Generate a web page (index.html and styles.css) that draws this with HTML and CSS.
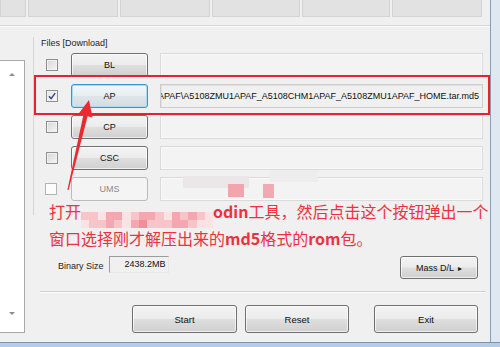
FILE: index.html
```html
<!DOCTYPE html>
<html lang="zh-CN">
<head>
<meta charset="utf-8">
<title>Odin</title>
<link rel="stylesheet" href="styles.css">
</head>
<body>
<div class="screen">
  <div class="top-area">
    <div class="window">
      <div class="topstrip">
        <div class="cell w26"></div>
        <div class="cell w90"></div>
        <div class="cell w90"></div>
        <div class="cell w88"></div>
        <div class="cell w88"></div>
        <div class="cell w90"></div>
      </div>
      <div class="rule"></div>
      <div class="main">
        <div class="list"><span class="tri up"></span><span class="tri down"></span></div>
        <div class="content">
          <div class="files">
            <div class="legend">Files [Download]</div>
            <div class="rows">
              <div class="row"><span class="chk"></span><button class="btn">BL</button><div class="field"></div></div>
              <div class="row"><span class="chk on"><svg viewBox="0 0 10 10" width="10" height="10"><path d="M2 5.2 L4.1 7.6 L8.2 2.2" fill="none" stroke="#2b3f8c" stroke-width="1.4"/></svg></span><button class="btn focus">AP</button><div class="field path"><span>APAF\A5108ZMU1APAF_A5108CHM1APAF_A5108ZMU1APAF_HOME.tar.md5</span></div></div>
              <div class="row"><span class="chk"></span><button class="btn">CP</button><div class="field"></div></div>
              <div class="row"><span class="chk"></span><button class="btn">CSC</button><div class="field"></div></div>
              <div class="row"><span class="chk dis"></span><button class="btn disabled">UMS</button><div class="field"></div></div>
            </div>
          </div>
          <div class="binary">
            <span class="blabel">Binary Size</span>
            <span class="bbox">2438.2MB</span>
            <button class="btn mass">Mass D/L <span class="play">&#9656;</span></button>
          </div>
          <div class="sep"></div>
          <div class="actions">
            <button class="btn act start">Start</button>
            <button class="btn act reset">Reset</button>
            <button class="btn act">Exit</button>
          </div>
        </div>
      </div>
    </div>
    <div class="frame-right"></div>
  </div>
  <div class="frame-bottom"></div>

  <div class="overlay">
    <div class="redbox"></div>
    <div class="smudge g1"></div>
    <div class="smudge g2"></div>
    <div class="smudge p1"></div>
    <div class="smudge p2"></div>
    <svg class="arrow" width="500" height="347" viewBox="0 0 500 347">
      <polygon points="89,100 92.5,117.5 87.6,116.2 68.6,190 67.4,190 83.3,115.2 78.4,114" fill="#ea2a2e"/>
    </svg>
    <div class="note">
      <div class="line">打开<span class="mosaic"><i class="s2"></i><i class="s2"></i><i class="s1"></i><i class="s3"></i><i class="s3"></i><i class="s1"></i><i class="s2"></i><i class="s3"></i><i class="s3"></i><i class="s2"></i><i class="s1"></i><i class="s3"></i><i class="s2"></i><i class="s3"></i><i class="s2"></i><i class="s1"></i><i class="s1"></i><i class="s2"></i><i class="s2"></i><i class="s3"></i><i class="s2"></i><i class="s1"></i><i class="s3"></i><i class="s4"></i><i class="s2"></i><i class="s2"></i><i class="s2"></i><i class="s3"></i><i class="s3"></i><i class="s2"></i><i class="s1"></i><i class="s1"></i></span><b>odin</b>工具，然后点击这个按钮弹出一个</div>
      <div class="line">窗口选择刚才解压出来的<b>md5</b>格式的<b>rom</b>包。</div>
    </div>
  </div>
</div>
</body>
</html>
```

FILE: styles.css
```css
* { box-sizing: border-box; }
html, body { margin: 0; padding: 0; }
body {
  width: 500px;
  height: 347px;
  overflow: hidden;
  background: #dde6ef;
  font-family: "Liberation Sans", Arial, sans-serif;
}
.screen {
  position: relative;
  width: 500px;
  height: 347px;
  display: flex;
  flex-direction: column;
}
.top-area { display: flex; height: 342px; }
.window {
  width: 491px;
  height: 342px;
  background: #f0f0f0;
  border-right: 1px solid #8a9cb0;
}
.frame-right { flex: 1; background: #dfe7f0; }
.frame-bottom {
  height: 5px;
  border-top: 1px solid #7f93aa;
  background: #b4cce6;
}

/* top status cells */
.topstrip {
  display: flex;
  gap: 2px;
  height: 17px;
}
.cell {
  height: 17px;
  background: #e2e2e2;
  border: 1px solid #d3d3d3;
  border-top: none;
}
.w26 { width: 26px; }
.w90 { width: 90px; }
.w88 { width: 88px; }
.rule {
  margin-top: 8px;
  border-top: 1px solid #d6d6d6;
  border-bottom: 1px solid #fbfbfb;
}

.main { display: flex; gap: 8px; }
.list {
  width: 25px;
  height: 273px;
  margin-top: 33px;
  background: #fff;
  border: 1px solid #a8a8a8;
  border-left: none;
  display: flex;
  flex-direction: column;
  justify-content: space-between;
  align-items: center;
  padding: 12px 0 17px;
}
.tri { width: 0; height: 0; border-left: 3px solid transparent; border-right: 3px solid transparent; }
.tri.up { border-bottom: 3px solid #8c8c8c; }
.tri.down { border-top: 3px solid #8c8c8c; }

.content { width: 450px; display: flex; flex-direction: column; }
.files {
  margin-top: 10px;
  border-left: 1px solid #d4d4d4;
  padding-bottom: 14px;
}
.legend {
  padding-left: 7px;
  height: 12px;
  line-height: 12px;
  font-size: 9px;
  color: #1e1e1e;
  margin-bottom: 4px;
}
.rows { display: flex; flex-direction: column; gap: 7px; }
.row {
  display: flex;
  align-items: center;
  height: 24px;
  padding-left: 12px;
}
.chk {
  width: 12px;
  height: 12px;
  flex: none;
  border: 1px solid #8e8f8f;
  background: linear-gradient(135deg, #d6d6d6, #f6f6f6);
  box-shadow: inset 0 0 0 1px #f1f1f1;
  display: flex;
  align-items: center;
  justify-content: center;
}
.chk.on { background: linear-gradient(135deg, #e4e4e4, #fbfbfb); }
.chk.dis {
  border-color: #b4b4b4;
  background: #fcfcfc;
  box-shadow: none;
  margin-left: -1px;
  margin-right: 1px;
}
.btn {
  font-family: "Liberation Sans", Arial, sans-serif;
  font-size: 9px;
  color: #111;
  padding: 0;
  border: 1px solid #707070;
  border-radius: 3px;
  background: linear-gradient(#f3f3f3 0%, #ececec 48%, #dedede 52%, #d0d0d0 100%);
  box-shadow: inset 0 0 0 1px rgba(255,255,255,0.65);
}
.row .btn {
  width: 77px;
  height: 24px;
  margin-left: 13px;
  flex: none;
}
.btn.focus {
  border-color: #3d93cf;
  background: linear-gradient(#f2f6f8 0%, #e8eef1 48%, #dde5e9 52%, #d3dde2 100%);
  box-shadow: inset 0 0 0 1px #a9dcf4;
}
.btn.disabled {
  border-color: #b8bcbe;
  background: #f4f4f4;
  color: #8a8a8a;
  box-shadow: none;
}
.field {
  flex: 1;
  height: 24px;
  margin-left: 12px;
  border: 1px solid #dadada;
  background: #f3f3f3;
  box-shadow: inset 0 0 0 1px #f9f9f9;
}
.field.path {
  display: flex;
  align-items: center;
  justify-content: flex-end;
  overflow: hidden;
  padding-right: 3px;
  border-color: #cdcdcd;
  background: #f0f0f0;
  box-shadow: inset 1px 1px 0 #e2e2e2;
  font-size: 9px;
  color: #111;
  white-space: nowrap;
}
.field.path span { flex: none; }

.binary {
  margin-top: 41px;
  display: flex;
  align-items: flex-start;
  height: 23px;
  padding-left: 25px;
  padding-right: 5px;
}
.blabel {
  font-size: 9px;
  line-height: 17px;
  padding-top: 2px;
  margin-right: 5px;
  color: #1e1e1e;
}
.bbox {
  width: 60px;
  height: 17px;
  border: 1px solid;
  border-color: #9c9c9c #e6e6e6 #e6e6e6 #9c9c9c;
  font-size: 9px;
  line-height: 15px;
  text-align: right;
  padding-right: 2px;
  color: #111;
}
.btn.mass {
  margin-left: auto;
  width: 78px;
  height: 23px;
}
.play { font-size: 8px; margin-left: 2px; }
.sep {
  margin-top: 12px;
  margin-left: 7px;
  margin-right: -3px;
  border-top: 1px solid #cfcfcf;
  border-bottom: 1px solid #fdfdfd;
}
.actions {
  margin-top: 12px;
  display: flex;
  justify-content: flex-end;
  padding-right: 5px;
  height: 28px;
}
.btn.act { width: 104px; height: 28px; font-size: 9.5px; }
.btn.start { width: 105px; margin-right: 8px; }
.btn.reset { margin-right: 25px; }

/* annotation overlay */
.overlay { position: absolute; left: 0; top: 0; width: 500px; height: 347px; pointer-events: none; }
.redbox {
  position: absolute;
  left: 34px;
  top: 75px;
  width: 456px;
  height: 40px;
  border: 2px solid #e8222a;
}
.arrow { position: absolute; left: 0; top: 0; }
.smudge { position: absolute; }
.g1 { left: 183px; top: 176px; width: 66px; height: 12px; background: #ebe6e7; }
.g2 { left: 270px; top: 170px; width: 48px; height: 12px; background: #ededed; }
.p1 { left: 228px; top: 184px; width: 16px; height: 13px; background: #f2a5ad; }
.p2 { left: 263px; top: 184px; width: 11px; height: 14px; background: #f1aab2; }
.note {
  position: absolute;
  left: 49px;
  top: 201px;
  font-family: "Noto Sans CJK SC", sans-serif;
  font-size: 16px;
  line-height: 21px;
  color: #f0313d;
  white-space: nowrap;
}
.note b { font-weight: 700; }
.mosaic {
  display: inline-grid;
  grid-template-columns: repeat(16, 8.25px);
  grid-template-rows: 8px 8px;
  width: 132px;
  height: 16px;
  vertical-align: -2px;
}
.mosaic i { display: block; }
.s1 { background: #fbe2e5; }
.s2 { background: #f7c4ca; }
.s3 { background: #f4a7b0; }
.s4 { background: #f08e9a; }
```
